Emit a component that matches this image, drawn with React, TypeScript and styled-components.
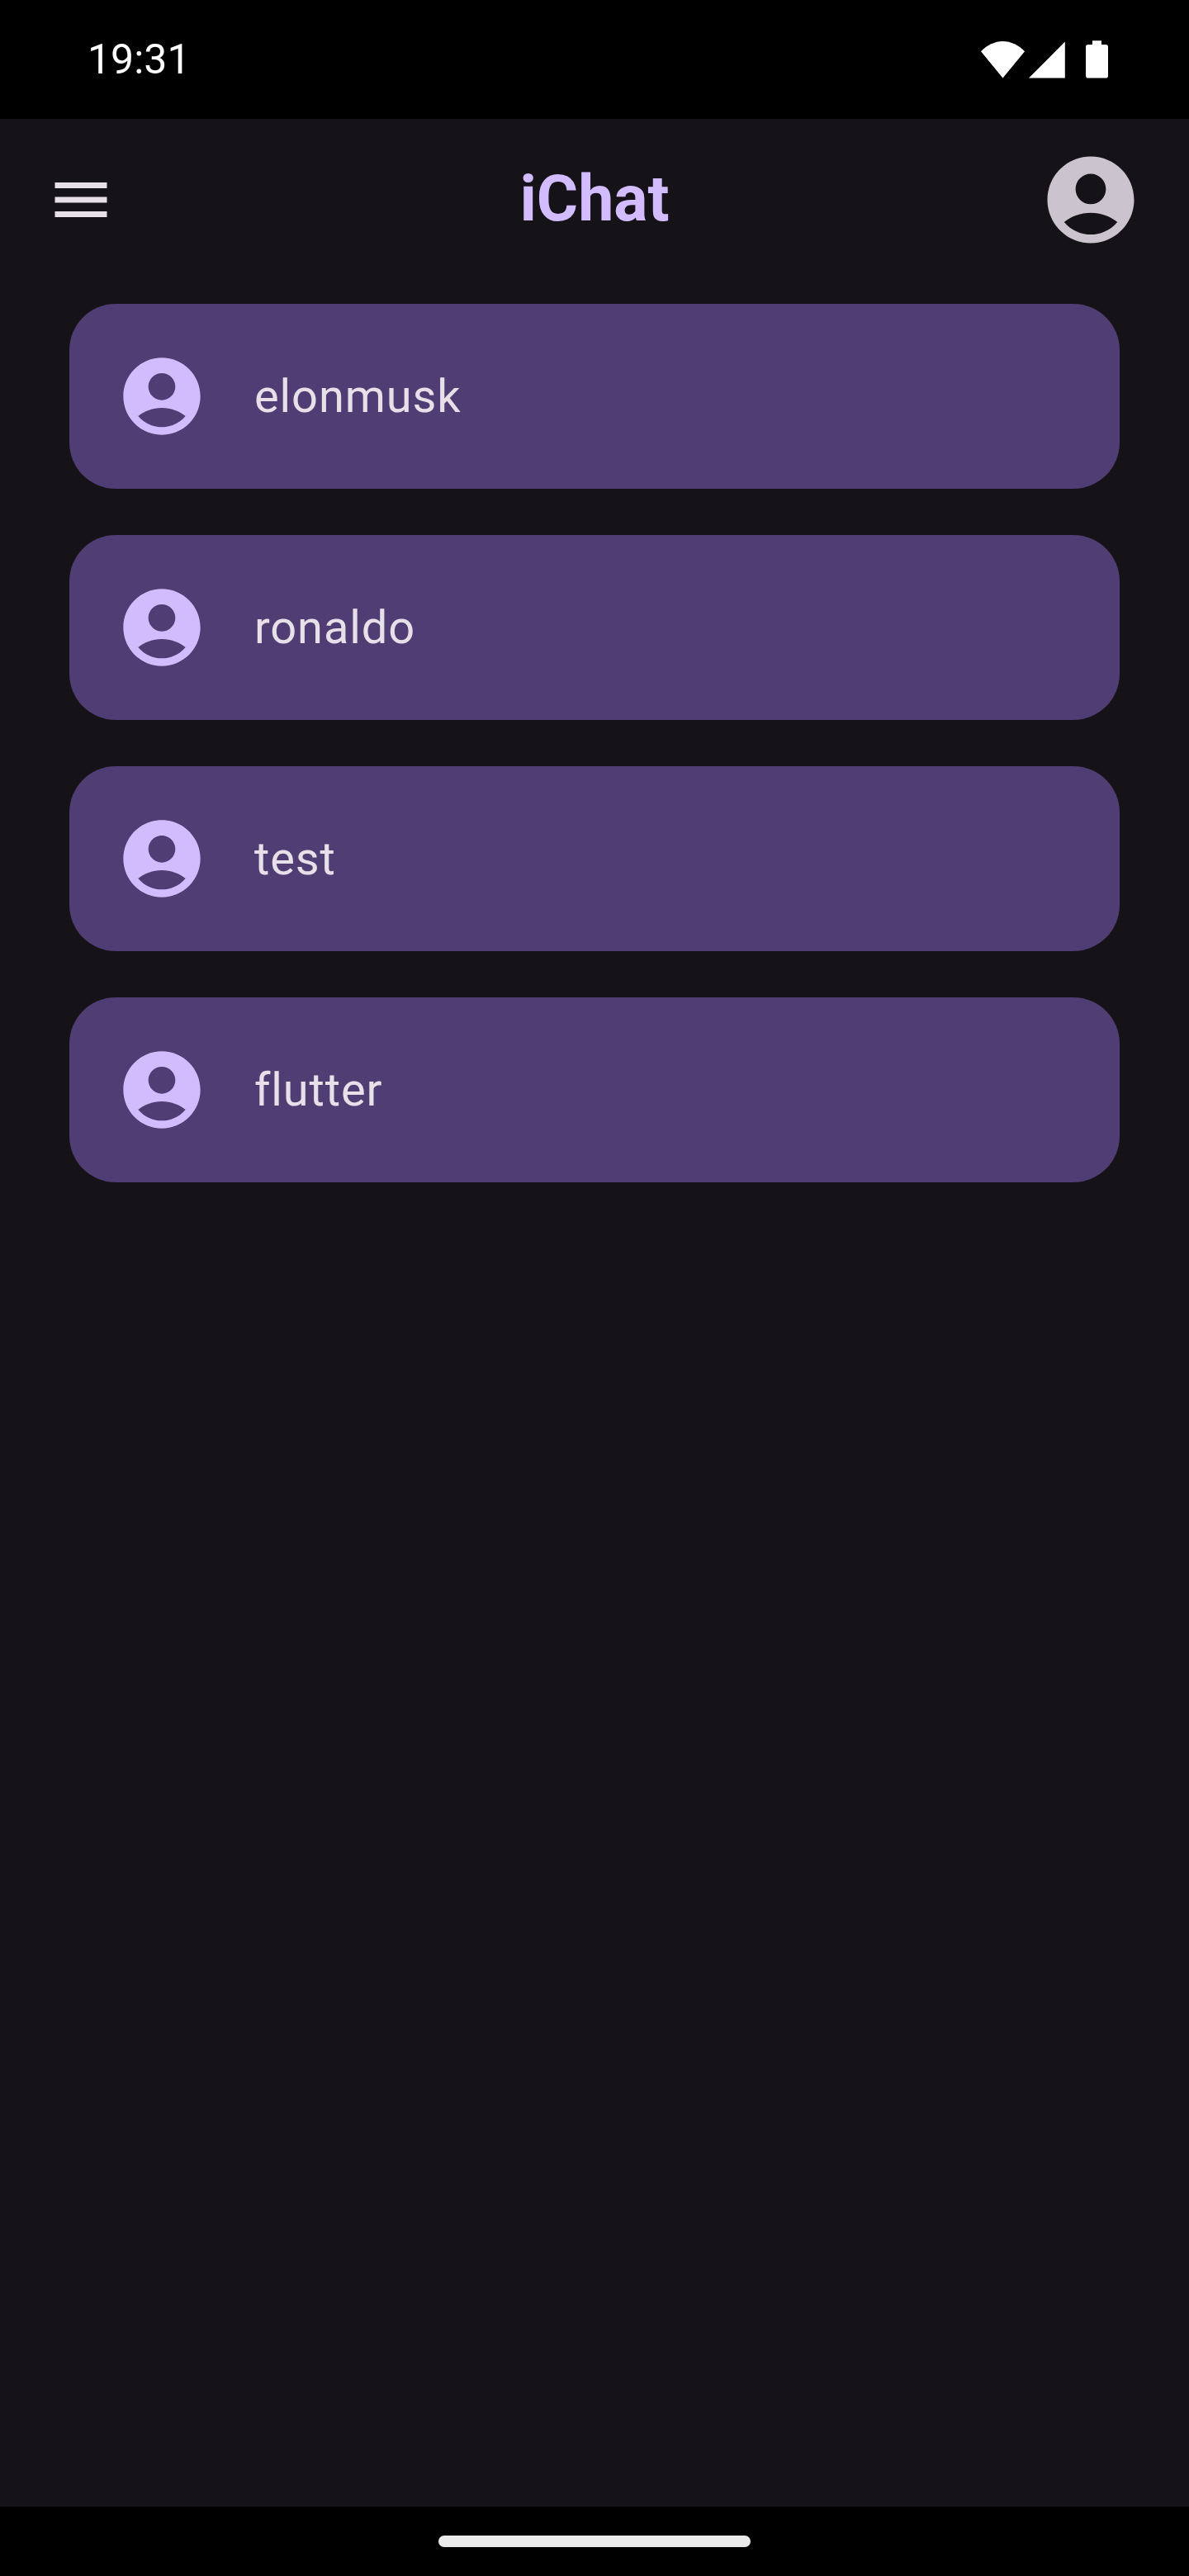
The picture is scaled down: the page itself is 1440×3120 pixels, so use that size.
import React from "react";
import styled, { createGlobalStyle } from "styled-components";

const GlobalStyle = createGlobalStyle`
  *, *::before, *::after { box-sizing: border-box; }
  body {
    margin: 0;
    background: #151218;
    font-family: Roboto, "Liberation Sans", sans-serif;
  }
`;

const Screen = styled.div`
  display: flex;
  flex-direction: column;
  width: 1440px;
  height: 3120px;
  background: #151218;
  overflow: hidden;
`;

const StatusBar = styled.header`
  display: flex;
  align-items: center;
  justify-content: space-between;
  flex: none;
  height: 144px;
  padding: 0 98px 0 106px;
  background: #000;
  color: #fff;
`;

const Clock = styled.span`
  font-size: 50px;
  line-height: 58px;
`;

const StatusIcons = styled.div`
  display: flex;
  align-items: flex-start;
  height: 46px;
`;

const StatusGlyph = styled.svg<{ $gap?: number }>`
  display: block;
  flex: none;
  fill: #fff;
  margin-left: ${(p) => p.$gap ?? 0}px;
`;

const AppBar = styled.nav`
  display: grid;
  grid-template-columns: 126px 1fr 126px;
  align-items: center;
  flex: none;
  height: 196px;
  padding: 0 56px;
`;

const IconButton = styled.button`
  display: flex;
  padding: 0;
  border: 0;
  background: none;
`;

const Icon = styled.svg<{ $size: number; $color: string }>`
  display: block;
  flex: none;
  width: ${(p) => p.$size}px;
  height: ${(p) => p.$size}px;
  fill: ${(p) => p.$color};
`;

const Title = styled.h1`
  margin: 0;
  padding-bottom: 2px;
  font-size: 77px;
  font-weight: 700;
  line-height: 98px;
  text-align: center;
  color: #d3bcfd;
`;

const ChatList = styled.main`
  display: flex;
  flex-direction: column;
  flex: 1;
  gap: 56px;
  padding: 28px 84px;
`;

const ChatRow = styled.div`
  display: flex;
  align-items: center;
  gap: 56px;
  height: 224px;
  padding: 0 56px;
  border-radius: 56px;
  background: #4f3d74;
`;

const UserName = styled.span`
  font-size: 56px;
  line-height: 84px;
  letter-spacing: 0.875px;
  color: #e7e0e8;
`;

const NavigationBar = styled.footer`
  display: flex;
  align-items: center;
  justify-content: center;
  flex: none;
  height: 84px;
  background: #000;
`;

const GestureHandle = styled.div`
  width: 378px;
  height: 14px;
  border-radius: 7px;
  background: #ebebeb;
`;

const AccountCircle = ({ size, color }: { size: number; color: string }) => (
  <Icon $size={size} $color={color} viewBox="0 0 24 24">
    <path d="M12 2C6.48 2 2 6.48 2 12s4.48 10 10 10 10-4.48 10-10S17.52 2 12 2zm0 4c1.93 0 3.5 1.57 3.5 3.5S13.93 13 12 13s-3.5-1.57-3.5-3.5S10.07 6 12 6zm0 14c-2.03 0-4.43-.82-6.14-2.88C7.55 15.8 9.68 15 12 15s4.45.8 6.14 2.12C16.43 19.18 14.03 20 12 20z" />
  </Icon>
);

const users = ["elonmusk", "ronaldo", "test", "flutter"];

export default function App() {
  return (
    <Screen>
      <GlobalStyle />
      <StatusBar>
        <Clock>19:31</Clock>
        <StatusIcons>
          <StatusGlyph width="53" height="46" viewBox="0 0 53 46">
            <path d="M26.5 45.6 0 13.2C7.4 5.8 16.7 1.1 26.5 1.1S45.6 5.8 53 13.2Z" />
          </StatusGlyph>
          <StatusGlyph $gap={5} width="44" height="46" viewBox="0 0 44 46">
            <path d="M0 45.5 43.8 1.5V45.5Z" />
          </StatusGlyph>
          <StatusGlyph $gap={25} width="27" height="46" viewBox="0 0 27 46">
            <path d="M8 0.3H19V5H24.2Q27 5 27 7.8V42.7Q27 45.5 24.2 45.5H2.8Q0 45.5 0 42.7V7.8Q0 5 2.8 5H8Z" />
          </StatusGlyph>
        </StatusIcons>
      </StatusBar>
      <AppBar>
        <IconButton aria-label="Menu">
          <Icon $size={84} $color="#e7e0e8" viewBox="0 0 24 24">
            <path d="M3 18h18v-2H3v2zm0-5h18v-2H3v2zm0-7v2h18V6H3z" />
          </Icon>
        </IconButton>
        <Title>iChat</Title>
        <IconButton aria-label="Account">
          <AccountCircle size={126} color="#cbc4cf" />
        </IconButton>
      </AppBar>
      <ChatList>
        {users.map((name) => (
          <ChatRow key={name}>
            <AccountCircle size={112} color="#d3bcfd" />
            <UserName>{name}</UserName>
          </ChatRow>
        ))}
      </ChatList>
      <NavigationBar>
        <GestureHandle />
      </NavigationBar>
    </Screen>
  );
}
